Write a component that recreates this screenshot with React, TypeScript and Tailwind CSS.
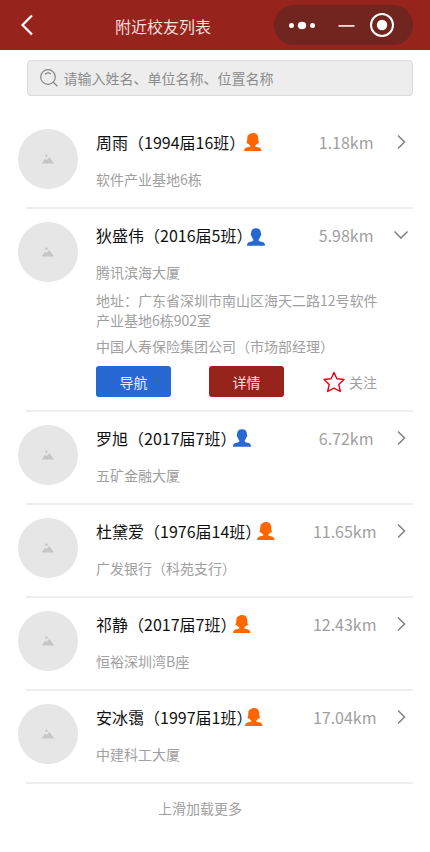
import { useState, type FC } from "react";
import { clsx } from "clsx";

interface Alumnus {
  name: string;
  className: string;
  gender: "male" | "female";
  // offset between the closing bracket and the gender icon
  iconOffset: string;
  place: string;
  distance: string;
  address?: string;
  company?: string;
}

const alumni: Alumnus[] = [
  {
    name: "周雨",
    className: "1994届16班",
    gender: "female",
    iconOffset: "-ml-[1.500px] -mt-0.5",
    place: "软件产业基地6栋",
    distance: "1.18km",
  },
  {
    name: "狄盛伟",
    className: "2016届5班",
    gender: "male",
    iconOffset: "-ml-[5px] mt-0.5",
    place: "腾讯滨海大厦",
    distance: "5.98km",
    address: "广东省深圳市南山区海天二路12号软件产业基地6栋902室",
    company: "中国人寿保险集团公司（市场部经理）",
  },
  {
    name: "罗旭",
    className: "2017届7班",
    gender: "male",
    iconOffset: "-ml-[3px] -mt-0.5",
    place: "五矿金融大厦",
    distance: "6.72km",
  },
  {
    name: "杜黛爱",
    className: "1976届14班",
    gender: "female",
    iconOffset: "-ml-1 -mt-0.5",
    place: "广发银行（科苑支行）",
    distance: "11.65km",
  },
  {
    name: "祁静",
    className: "2017届7班",
    gender: "female",
    iconOffset: "-ml-[3px] -mt-0.5",
    place: "恒裕深圳湾B座",
    distance: "12.43km",
  },
  {
    name: "安冰霭",
    className: "1997届1班",
    gender: "female",
    iconOffset: "-ml-[7px] -mt-0.5",
    place: "中建科工大厦",
    distance: "17.04km",
  },
];

const MaleIcon = () => (
  <svg width="18" height="18" viewBox="0 0 18 18" fill="#2768d2">
    <path d="M9 .3c-3.200 0-4.900 1.800-4.900 4.700 0 .9-.5 1.200-.3 2.100.1.700.5 1 .8 1.200.3 1.300.9 2.400 1.700 3.100v1.100c-.6.8-2.200 1.100-3.900 1.600C.7 14.600.1 15.700 0 17.800h18c-.1-2.100-.7-3.200-2.400-3.700-1.700-.5-3.300-.8-3.900-1.600v-1.100c.8-.7 1.400-1.800 1.700-3.100.3-.2.7-.5.8-1.200.2-.9-.3-1.200-.3-2.100C13.900 2.100 12.200.3 9 .3z" />
  </svg>
);

const FemaleIcon = () => (
  <svg width="18" height="18" viewBox="0 0 18 18" fill="#ff6600">
    <path d="M9.200 0C7.500 0 7.200.5 6.200.8 4.200 1.500 3.400 3 3.300 5c-.1 1.800-.1 3.400-.9 5.100.8.500 1.600.7 2.300.8.400.7 1 1.200 1.600 1.600v1.100c-.6.5-2.200.6-3.800.9C.9 14.900.1 16 0 18h17.500c-.1-2-.9-3.100-2.500-3.500-1.600-.3-3.200-.4-3.800-.9v-1.100c.6-.4 1.200-.9 1.600-1.600.7-.1 1.500-.3 2.300-.8-.8-1.700-.8-3.300-.9-5.100C14 1.700 12.200 0 9.200 0z" />
  </svg>
);

const Avatar = () => (
  <div className="flex size-[60px] shrink-0 items-center justify-center rounded-full bg-[#e6e6e6]">
    <svg width="14" height="10" viewBox="0 0 14 10" fill="#c6c6c6">
      <path d="M.5 9.500 4 4.800l1.600 1.300L8.300 3l5 6.500z" />
      <circle cx="5.500" cy="1.800" r="1.200" />
    </svg>
  </div>
);

const Header = () => (
  <header className="flex h-[50px] items-center bg-[#96231c] text-white">
    <svg
      className="ml-5 shrink-0"
      width="14"
      height="22"
      viewBox="0 0 14 22"
      fill="none"
      stroke="currentColor"
      strokeWidth="2.200"
    >
      <path d="M12 1.500 2.500 11 12 20.500" />
    </svg>
    <h1 className="ml-[81px] mt-0.5 text-base text-[#f8dfdc]">附近校友列表</h1>
    <div className="ml-auto mr-[17px] flex h-10 w-[139px] items-center rounded-full bg-[#70261f]">
      <svg width="139" height="40" viewBox="0 0 139 40" fill="white">
        <circle cx="17.500" cy="20.500" r="2.500" />
        <ellipse cx="28" cy="20.500" rx="4.200" ry="3.700" />
        <circle cx="38.500" cy="20.500" r="2.500" />
        <path d="M64.500 20h16v1.800h-16z" fill="#f9dedc" />
        <circle cx="108" cy="20" r="11" fill="none" stroke="white" strokeWidth="2" />
        <circle cx="108" cy="20" r="5.200" />
      </svg>
    </div>
  </header>
);

const SearchBar = () => (
  <div className="ml-[27px] mr-[17px] mt-2.5 flex h-9 items-center rounded border border-[#d9dcdb] bg-[#ededed] text-sm text-[#8c8c8c]">
    <svg
      className="ml-3 mr-[5.500px] shrink-0"
      width="18"
      height="18"
      viewBox="0 0 18 18"
      fill="none"
      stroke="#858585"
      strokeWidth="1.200"
    >
      <circle cx="8" cy="8" r="7.300" />
      <path d="m13.200 13.200 4.200 4M5 5.500c1.500-1.700 4-1.900 5.800-.6" />
    </svg>
    <span className="-mt-px">请输入姓名、单位名称、位置名称</span>
  </div>
);

const AlumnusRow: FC<{
  item: Alumnus;
  open: boolean;
  onToggle: () => void;
}> = ({ item, open, onToggle }) => {
  return (
    <li className="ml-[26px] mr-[17px] border-b-2 border-[#eeeeee] pt-[13px]">
      <div className="-ml-2 flex">
        <Avatar />
        <div className="ml-[18px] min-w-0 flex-1">
          <div className="flex h-7 items-center" onClick={onToggle}>
            <span className="-mt-0.5 whitespace-nowrap text-base text-[#111111]">
              {`${item.name}（${item.className}）`}
            </span>
            <span className={clsx("shrink-0", item.iconOffset)}>
              {item.gender === "male" ? <MaleIcon /> : <FemaleIcon />}
            </span>
            <span
              className={clsx(
                "-mt-0.5 ml-auto text-base text-[#a0a0a0]",
                item.distance.length > 6 ? "mr-[16.500px]" : "mr-[19.500px]",
              )}
            >
              {item.distance}
            </span>
            <svg
              className="-mt-0.5 shrink-0"
              width="20"
              height="16"
              viewBox="0 0 20 16"
              fill="none"
              stroke="#858585"
              strokeWidth="1.600"
            >
              <path d={open ? "M1.500 4.500 8 11l6.500-6.500" : "m5 1.500 6.500 6.500L5 14.500"} />
            </svg>
          </div>
          <div className="pt-3 text-sm text-[#a0a0a0]">
            <p>{item.place}</p>
            {open && (
              <>
                {item.address && (
                  <p className="mt-2 w-[284px]">{`地址：${item.address}`}</p>
                )}
                {item.company && <p className="mt-1.5">{item.company}</p>}
                <div className="mt-2.5 flex h-[31px] items-center">
                  <button className="h-full w-[75px] rounded-[3px] bg-[#2768d2] text-[#e8effb]">
                    导航
                  </button>
                  <button className="ml-[38px] h-full w-[75px] rounded-[3px] bg-[#96231c] text-[#f8dfdc]">
                    详情
                  </button>
                  <button className="ml-[39px] flex items-center gap-1">
                    <svg
                      width="22"
                      height="22"
                      viewBox="0 0 22 22"
                      fill="none"
                      stroke="#e60012"
                      strokeWidth="1.400"
                      strokeLinejoin="round"
                    >
                      <path d="m11 1.500 2.900 6.300 7.100.7-5.200 4.900 1.500 7.100L11 17.100l-6.300 3.400 1.500-7.100L1 8.500l7.100-.7z" />
                    </svg>
                    <span>关注</span>
                  </button>
                </div>
              </>
            )}
          </div>
        </div>
      </div>
      <div className={open ? "h-[13px]" : "h-[18px]"} />
    </li>
  );
};

export default function App() {
  const [openIndex, setOpenIndex] = useState(1);

  return (
    <div className="min-h-[852px] w-full bg-white font-['Noto_Sans_CJK_SC',sans-serif]">
      <Header />
      <SearchBar />
      <ul className="mt-5">
        {alumni.map((item, i) => (
          <AlumnusRow
            key={item.name}
            item={item}
            open={i === openIndex}
            onToggle={() => setOpenIndex(i === openIndex ? -1 : i)}
          />
        ))}
      </ul>
      <p className="mr-[30px] mt-3.5 text-center text-sm text-[#a0a0a0]">
        上滑加载更多
      </p>
    </div>
  );
}
